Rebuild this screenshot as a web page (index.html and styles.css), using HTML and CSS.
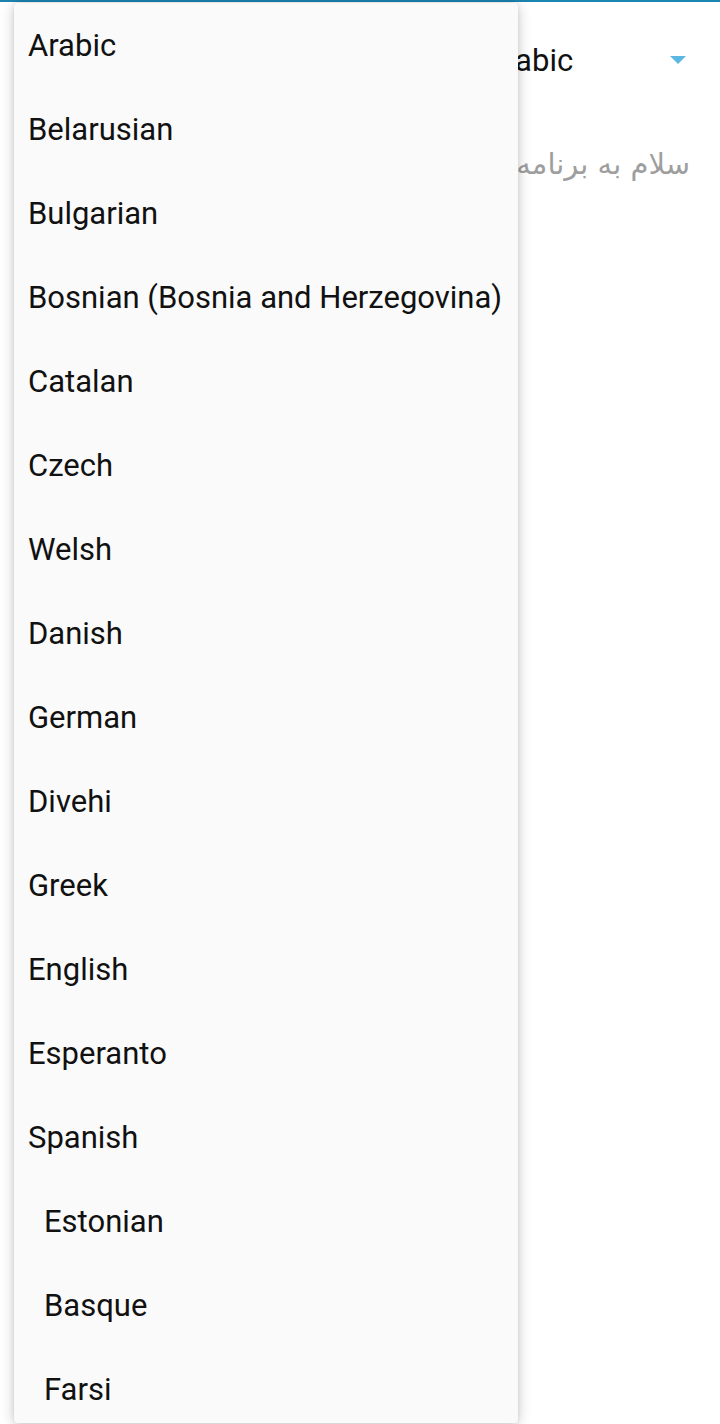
FILE: index.html
```html
<!DOCTYPE html>
<html>
<head>
<meta charset="utf-8">
<link rel="stylesheet" href="styles.css">
</head>
<body>
<div class="topline"></div>
<main class="page">
  <div class="spinner">
    <span class="spinner-value">Arabic</span>
    <svg class="spinner-arrow" width="16" height="9" viewBox="0 0 16 9"><path d="M0 0 L16 0 L8 8 Z" fill="#5ab8e2"/></svg>
  </div>
  <p class="greeting" dir="rtl">سلام به برنامه خوش آمدید</p>
</main>
<div class="menu">
  <ul class="menu-list">
    <li class="item">Arabic</li>
    <li class="item">Belarusian</li>
    <li class="item">Bulgarian</li>
    <li class="item">Bosnian (Bosnia and Herzegovina)</li>
    <li class="item">Catalan</li>
    <li class="item">Czech</li>
    <li class="item">Welsh</li>
    <li class="item">Danish</li>
    <li class="item">German</li>
    <li class="item">Divehi</li>
    <li class="item">Greek</li>
    <li class="item">English</li>
    <li class="item">Esperanto</li>
    <li class="item">Spanish</li>
    <li class="item indent">Estonian</li>
    <li class="item indent">Basque</li>
    <li class="item indent">Farsi</li>
  </ul>
</div>
</body>
</html>
```
FILE: styles.css
```css
html, body {
  margin: 0;
  padding: 0;
  background: #ffffff;
  font-family: Roboto, "Noto Sans", sans-serif;
  width: 720px;
  height: 1424px;
  overflow: hidden;
}
.topline {
  height: 2px;
  background: #1b84b0;
}
.page {
  display: flex;
  flex-direction: column;
  padding: 0 30px 0 485px;
}
.spinner {
  display: flex;
  align-items: center;
  justify-content: space-between;
  height: 116px;
}
.spinner-value {
  font-size: 31px;
  color: #111;
}
.spinner-arrow {
  margin-right: 4px;
  margin-top: 0px;
}
.greeting {
  margin: 0;
  font-family: "DejaVu Sans", "Noto Sans", sans-serif;
  font-size: 29px;
  color: #9e9e9e;
  white-space: nowrap;
  text-align: right;
  direction: rtl;
  line-height: 44px;
  margin-top: 24px;
}
.menu {
  position: absolute;
  left: 14px;
  top: 3px;
  width: 504px;
  height: 1420px;
  background: #fafafa;
  border-radius: 4px;
  box-shadow: 0 2px 14px rgba(0,0,0,0.22), 0 0 4px rgba(0,0,0,0.08);
  overflow: hidden;
}
.menu-list {
  list-style: none;
  margin: 0;
  padding: 1px 0 0;
}
.item {
  height: 84px;
  line-height: 84px;
  padding-left: 14px;
  font-size: 31px;
  color: #111;
  white-space: nowrap;
}
.item.indent {
  padding-left: 30px;
}
```
